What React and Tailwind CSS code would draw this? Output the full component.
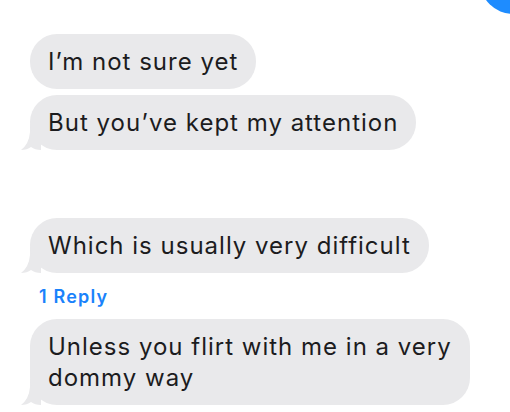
import React from "react";

function Tail() {
  return (
    <svg
      className="absolute left-[-9px] bottom-0"
      width="24"
      height="26"
      viewBox="0 0 24 26"
    >
      <path d="M9 0 L20 0 L20 26 Q14 26 10 23 Q6 26 0 26 Q8 20 9 8 Z" fill="#e9e9eb" />
    </svg>
  );
}

function Bubble({ children, tail }) {
  return (
    <div className="relative self-start">
      {tail && <Tail />}
      <div className="relative bg-[#e9e9eb] rounded-[27px] px-[18px] py-[12px] text-[24px] leading-[31px] tracking-[1px] text-[#1c1c1e] max-w-[440px]">
        {children}
      </div>
    </div>
  );
}

export default function App() {
  return (
    <div
      className="relative w-[510px] h-[412px] bg-white overflow-hidden"
      style={{ fontFamily: "Inter, 'Liberation Sans', sans-serif" }}
    >
      <div className="absolute left-[480px] top-[-52px] w-[66px] h-[66px] rounded-full bg-[#1e8cff]" />
      <div className="flex flex-col pl-[30px] pt-[34px]">
        <Bubble>I’m not sure yet</Bubble>
        <div className="h-[6px]" />
        <Bubble tail>But you’ve kept my attention</Bubble>
        <div className="h-[68px]" />
        <Bubble tail>Which is usually very difficult</Bubble>
        <div className="pl-[9px] pt-[12px] pb-[10px] text-[18px] leading-[24px] font-semibold tracking-[1.2px] text-[#1a82fb]">
          1 Reply
        </div>
        <Bubble tail>
          Unless you flirt with me in a very
          <br />
          dommy way
        </Bubble>
      </div>
    </div>
  );
}
